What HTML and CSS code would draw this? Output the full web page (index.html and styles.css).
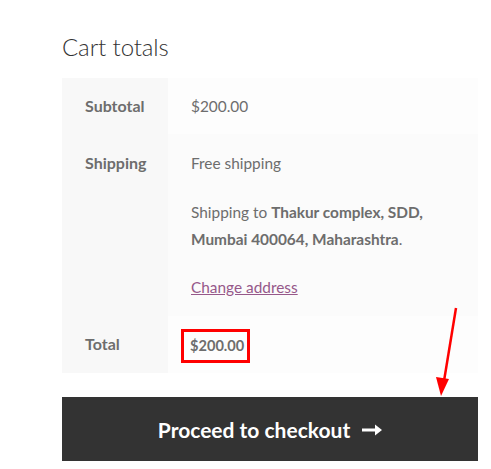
FILE: index.html
```html
<!DOCTYPE html>
<html>
<head>
<meta charset="utf-8">
<link rel="stylesheet" href="styles.css">
</head>
<body>
<div class="cart-totals">
  <h2 class="title">Cart totals</h2>
  <table class="totals">
    <tbody>
      <tr class="row-odd">
        <th>Subtotal</th>
        <td>$200.00</td>
      </tr>
      <tr class="row-even">
        <th class="top">Shipping</th>
        <td>
          <p class="line">Free shipping</p>
          <p class="dest">Shipping to <strong>Thakur complex, SDD, Mumbai 400064, Maharashtra</strong>.</p>
          <p class="line"><a href="#" class="change">Change address</a></p>
        </td>
      </tr>
      <tr class="row-odd total-row">
        <th>Total</th>
        <td><span class="amount">$200.00</span></td>
      </tr>
    </tbody>
  </table>
  <a href="#" class="checkout">Proceed to checkout
    <svg class="go" width="20" height="12" viewBox="0 0 20 12"><path d="M0 4.5 H13 V0.5 L20 6 L13 11.5 V7.5 H0 Z" fill="#fff"/></svg>
  </a>
  <svg class="annot" width="30" height="95" viewBox="0 0 30 95">
    <line x1="24" y1="1" x2="12" y2="74" stroke="#ff0000" stroke-width="2.5"/>
    <path d="M4 70 L17 72 L9 89 Z" fill="#ff0000"/>
  </svg>
</div>
</body>
</html>
```
FILE: styles.css
```css
html, body {
  margin: 0;
  padding: 0;
  background: #ffffff;
}
body {
  font-family: Lato, "Liberation Sans", sans-serif;
  font-size: 16px;
  color: #6d6d6d;
}
.cart-totals {
  position: relative;
  width: 416px;
  padding: 31px 0 0 62px;
}
.title {
  margin: 0 0 15px 0;
  font-size: 24px;
  font-weight: 300;
  line-height: 32px;
  color: #333333;
  letter-spacing: -0.1px;
}
.totals {
  width: 416px;
  border-collapse: collapse;
  border-spacing: 0;
  table-layout: fixed;
}
.totals th {
  width: 60px;
  text-align: left;
  font-weight: 700;
  color: #6d6d6d;
  background: #f8f8f8;
  padding: 15px 23px;
  line-height: 26px;
  vertical-align: middle;
}
.totals th.top {
  vertical-align: top;
  padding-top: 16px;
}
.totals td {
  padding: 15px 22px 15px 23px;
  line-height: 26px;
  vertical-align: middle;
  font-size: 15.4px;
}
.row-odd td { background: #fdfdfd; }
.row-even td { background: #fbfbfb; }
.row-even td { padding-top: 16px; padding-bottom: 16px; }
.line, .dest {
  margin: 0;
}
.dest {
  margin: 23px 0 21px 0;
  line-height: 27px;
}
.dest strong {
  font-weight: 700;
}
.change {
  color: #96588a;
  text-decoration: underline;
}
.total-row th {
  padding-top: 15px;
  padding-bottom: 16px;
}
.total-row td {
  padding-top: 13px;
  padding-bottom: 10px;
}
.amount {
  display: block;
  width: max-content;
  margin-left: -10px;
  padding: 0 3px 0 6px;
  border: 3px solid #ff0000;
  font-weight: 700;
  font-size: 14.6px;
  line-height: 28px;
}
.checkout {
  display: flex;
  align-items: center;
  justify-content: center;
  gap: 12px;
  margin-top: 24px;
  width: 416px;
  height: 64px;
  background: #333333;
  color: #ffffff;
  font-weight: 700;
  font-size: 21px;
  text-decoration: none;
}
.go {
  display: block;
  margin-top: 1px;
}
.annot {
  position: absolute;
  left: 432px;
  top: 307px;
}
```
